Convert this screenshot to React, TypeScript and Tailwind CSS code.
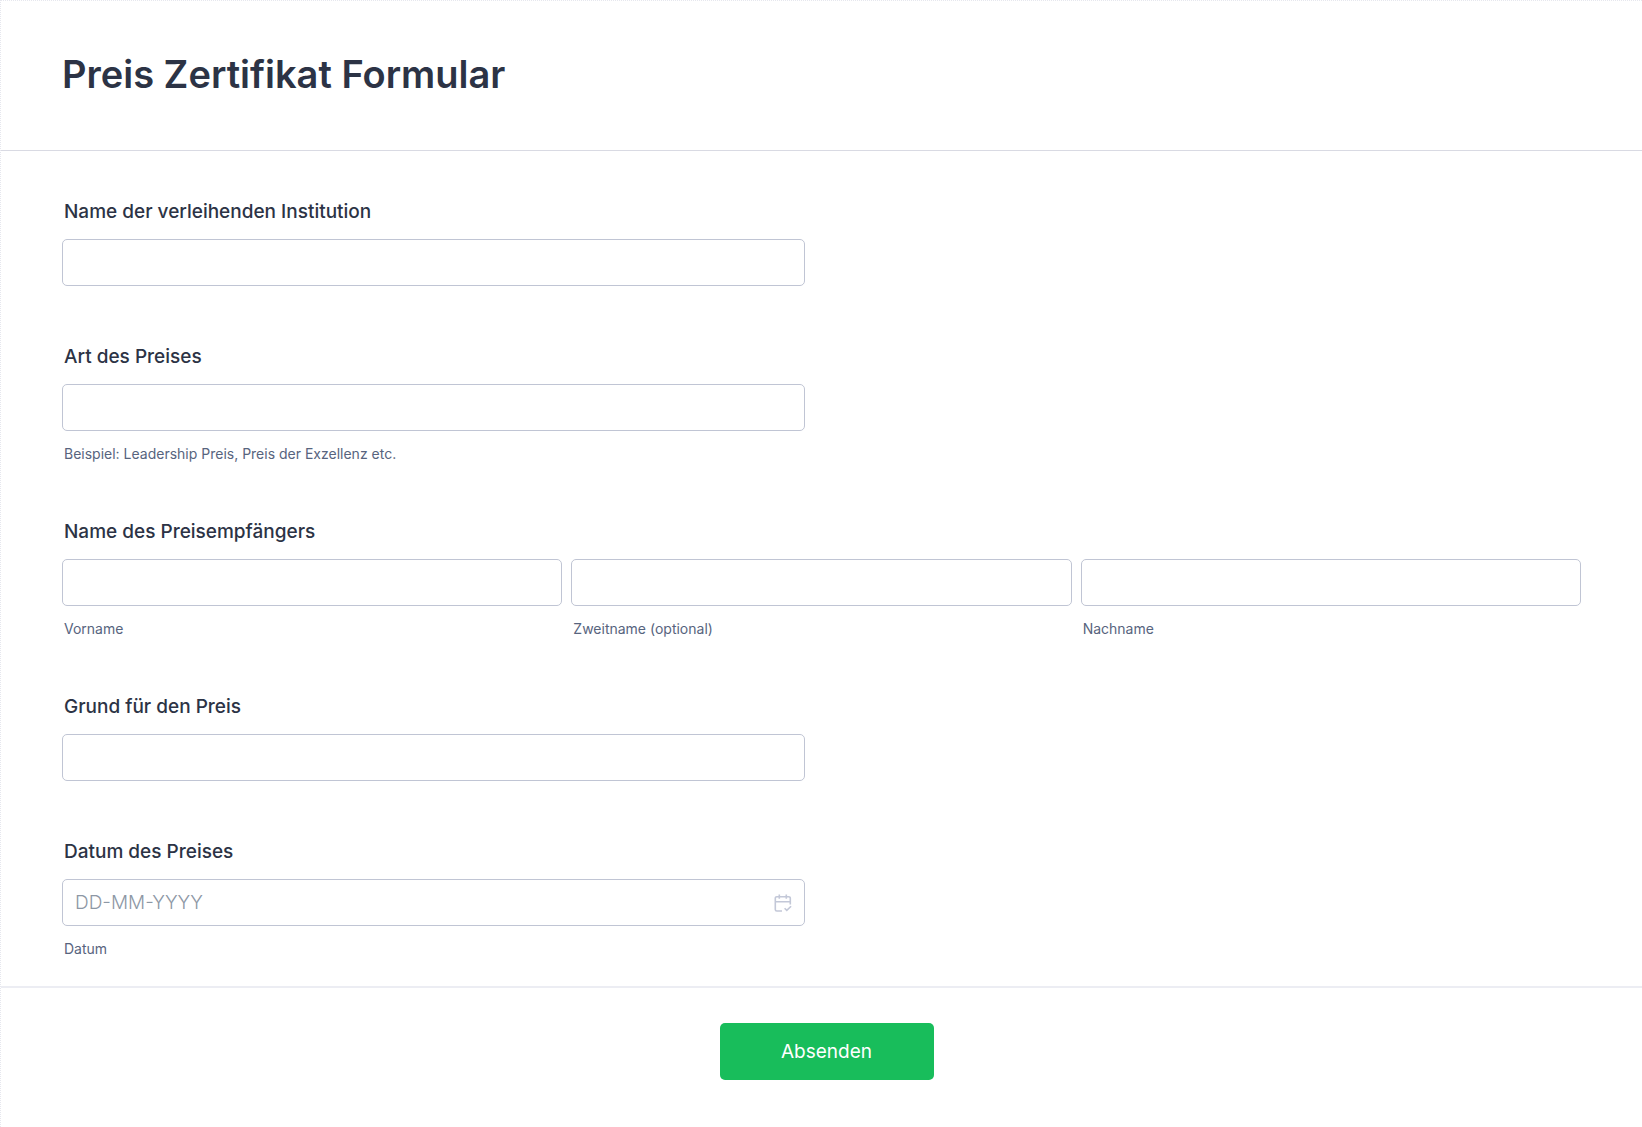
import type { ReactNode } from "react";

const inputClass =
  "block h-[47px] w-full rounded-[5px] border border-[#c0c5d4] bg-white px-3 text-[19px] text-[#2c3345] placeholder:font-light placeholder:text-[#8d97a5] focus:outline-none focus:ring-2 focus:ring-[#18bd5b]";

const labelClass = "block px-[2px] text-[19px] leading-6 font-medium text-[#2c3345]";
const hintClass = "mt-[15px] block px-[2px] text-sm leading-[15px] text-[#57647e]";

type FieldProps = {
  id: string;
  label: string;
  hint?: string;
  placeholder?: string;
  icon?: ReactNode;
};

function CalendarIcon() {
  return (
    <svg viewBox="0 0 18 18" className="h-[18px] w-[18px]" fill="none" stroke="currentColor" strokeWidth="1.6">
      <path d="M8 17H2.8A1.5 1.5 0 0 1 1.3 15.5V4.2A1.5 1.5 0 0 1 2.8 2.7h12a1.5 1.5 0 0 1 1.5 1.5v6.3" />
      <path d="M1.3 7.8h15M5.3 0.4v4.4M12.3 0.4v4.4" />
      <path d="M10.6 14.2l2.2 2.2 4.3-4.2" />
    </svg>
  );
}

function Field({ id, label, hint, placeholder, icon }: FieldProps) {
  return (
    <div className="w-full md:w-[calc(50%-17px)]">
      <label htmlFor={id} className={labelClass}>
        {label}
      </label>
      <div className="relative mt-[15px]">
        <input id={id} name={id} type="text" placeholder={placeholder} className={inputClass} />
        {icon ? (
          <button
            type="button"
            aria-label="Datum auswählen"
            className="absolute inset-y-0 right-[13px] flex items-center text-[#c3c8d8]"
          >
            {icon}
          </button>
        ) : null}
      </div>
      {hint ? <span className={hintClass}>{hint}</span> : null}
    </div>
  );
}

const nameParts = [
  { id: "vorname", hint: "Vorname" },
  { id: "zweitname", hint: "Zweitname (optional)" },
  { id: "nachname", hint: "Nachname" },
];

export default function App() {
  return (
    <form
      className="min-h-screen border-t border-l border-dotted border-[#e6e7ee] bg-white font-['Inter',sans-serif]"
      onSubmit={(e) => e.preventDefault()}
    >
      <header className="border-b border-[#d9dae3] px-[61px] pt-[49px] pb-[52px]">
        <h1 className="text-[38px] leading-12 font-semibold text-[#2c3345]">Preis Zertifikat Formular</h1>
      </header>

      <div className="flex flex-col gap-[59px] px-[61px] pt-[49px] pb-[30px]">
        <Field id="institution" label="Name der verleihenden Institution" />
        <Field id="art" label="Art des Preises" hint="Beispiel: Leadership Preis, Preis der Exzellenz etc." />

        <fieldset>
          <legend className={labelClass}>Name des Preisempfängers</legend>
          <div className="mt-[15px] grid gap-[9px] md:grid-cols-3">
            {nameParts.map((part) => (
              <div key={part.id}>
                <input id={part.id} name={part.id} type="text" className={inputClass} />
                <label htmlFor={part.id} className={hintClass}>
                  {part.hint}
                </label>
              </div>
            ))}
          </div>
        </fieldset>

        <Field id="grund" label="Grund für den Preis" />
        <Field
          id="datum"
          label="Datum des Preises"
          hint="Datum"
          placeholder="DD-MM-YYYY"
          icon={<CalendarIcon />}
        />
      </div>

      <footer className="flex justify-center border-t-2 border-[#ecedf3] pt-[35px] pb-11 pl-[10px]">
        <button
          type="submit"
          className="h-[57px] min-w-[214px] rounded-[5px] bg-[#18bd5b] px-6 pt-[2px] text-[19px] text-white"
        >
          Absenden
        </button>
      </footer>
    </form>
  );
}
